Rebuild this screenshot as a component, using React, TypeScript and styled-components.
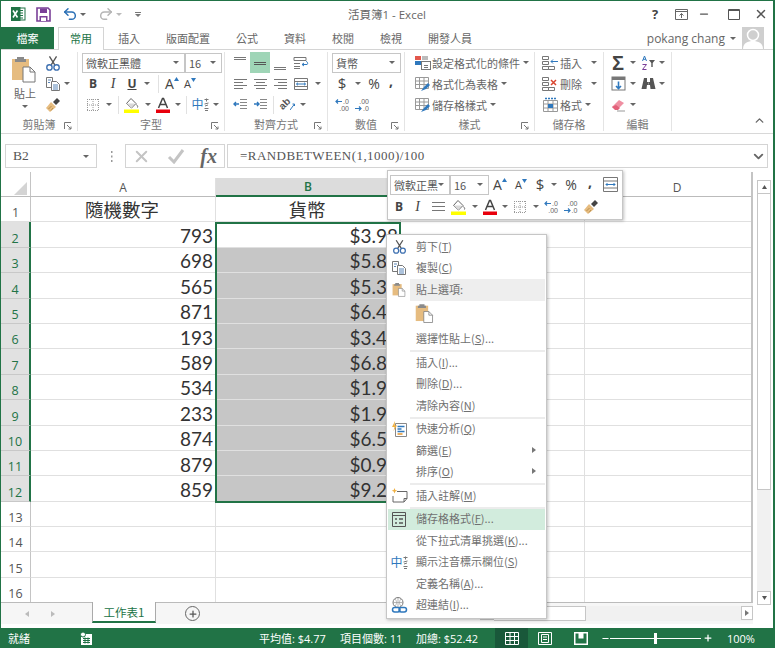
import * as React from 'react'
import styled, { createGlobalStyle } from 'styled-components'
import { Undo2, Redo2, Plus, Minus, ChevronUp, ChevronDown, X as CloseIcon } from 'lucide-react'

const GREEN = '#217346'
const UI_FONT = `"Open Sans", "Noto Sans CJK TC", sans-serif`
const CJK_FONT = `"Noto Sans CJK TC", "Open Sans", sans-serif`

const Global = createGlobalStyle`
  html, body { margin: 0; padding: 0; background: #fff; }
  * { box-sizing: border-box; }
`

const Window = styled.div`
  position: relative;
  width: 775px;
  height: 648px;
  overflow: hidden;
  background: #fff;
  border-top: 1px solid ${GREEN};
  border-left: 1px solid ${GREEN};
  border-right: 2px solid ${GREEN};
  display: flex;
  flex-direction: column;
  font-family: ${UI_FONT};
  font-size: 11px;
  color: #666;
`

const TitleBar = styled.div`
  height: 26px;
  display: grid;
  grid-template-columns: 1fr auto 1fr;
  align-items: center;
`
const QuickAccess = styled.div`
  display: flex;
  align-items: center;
  padding-left: 9px;
`
const TitleText = styled.div`
  font-size: 11.5px;
  color: #666;
`
const WindowButtons = styled.div`
  display: flex;
  align-items: center;
  justify-content: flex-end;
`

// slot for one icon or glyph, width is what varies
const Tool = styled.div<{ $w: number; $on?: boolean }>`
  width: ${({ $w }) => $w}px;
  height: 100%;
  flex: none;
  display: flex;
  align-items: center;
  justify-content: center;
  background: ${({ $on }) => ($on ? '#9fd5b7' : 'transparent')};
`
const Caret = styled.i<{ $c?: string }>`
  display: block;
  width: 0;
  height: 0;
  border-left: 3px solid transparent;
  border-right: 3px solid transparent;
  border-top: 3px solid ${({ $c }) => $c || '#666'};
`
const CaretTool = ({ w = 12, c }: { w?: number; c?: string }) => (
  <Tool $w={w}>
    <Caret $c={c} />
  </Tool>
)
const CustomizeMark = styled.div`
  width: 6px;
  border-top: 1px solid #777;
  padding-top: 1px;
`

const TabStrip = styled.div`
  height: 23px;
  display: flex;
  align-items: flex-start;
  border-bottom: 1px solid #d4d4d4;
`
const FileTab = styled.div`
  width: 53px;
  height: 22px;
  background: ${GREEN};
  color: #fff;
  display: flex;
  align-items: center;
  justify-content: center;
  font-family: ${CJK_FONT};
  font-size: 11px;
`
const RibbonTab = styled.div<{ $active?: boolean }>`
  padding: 0 ${({ $active }) => ($active ? 11 : 13)}px 2px;
  font-family: ${CJK_FONT};
  font-size: 11px;
  display: flex;
  align-items: center;
  height: ${({ $active }) => ($active ? '23px' : '22px')};
  color: ${({ $active }) => ($active ? GREEN : '#666')};
  background: #fff;
  margin-left: ${({ $active }) => ($active ? '4px' : '0')};
  border: 1px solid ${({ $active }) => ($active ? '#d4d4d4' : 'transparent')};
  border-bottom: none;
  margin-right: ${({ $active }) => ($active ? '0' : '-2px')};
  position: relative;
`
const UserBox = styled.div`
  margin-left: auto;
  height: 22px;
  display: flex;
  align-items: center;
  font-size: 12px;
  color: #666;
  padding-right: 9px;
`
const Avatar = styled.div`
  width: 22px;
  height: 22px;
  background: #cfcfcf;
  margin-left: 1px;
  overflow: hidden;
`

const Ribbon = styled.div`
  height: 84px;
  display: flex;
  border-bottom: 1px solid #d8d8d8;
`
const Group = styled.div<{ $w: number }>`
  width: ${({ $w }) => $w}px;
  flex: none;
  margin: 2px 0 2px;
  border-right: 1px solid #e4e4e4;
  display: flex;
  flex-direction: column;
`
const GroupBody = styled.div`
  height: 63px;
  display: flex;
  flex-direction: column;
`
const GroupLabel = styled.div`
  flex: 1;
  display: flex;
  align-items: center;
  justify-content: center;
  position: relative;
  font-family: ${CJK_FONT};
  font-size: 11px;
  color: #777;
  padding-top: 1px;
`
const Launcher = styled.svg`
  position: absolute;
  right: 5px;
  bottom: 2px;
`
const ToolRow = styled.div<{ $pad?: number }>`
  height: 21px;
  display: flex;
  align-items: center;
  padding-left: ${({ $pad }) => $pad || 0}px;
  flex: none;
`
const Divider = styled.i<{ $m?: number }>`
  display: block;
  width: 1px;
  height: 18px;
  background: #e1e1e1;
  margin: 0 ${({ $m }) => $m ?? 3}px;
  flex: none;
`
const ClipboardBody = styled.div`
  display: flex;
  height: 63px;
`
const PasteButton = styled.div`
  width: 44px;
  padding-left: 10px;
  padding-top: 3px;
  display: flex;
  flex-direction: column;
  align-items: flex-start;
  font-family: ${CJK_FONT};
  color: #666;
`
const PasteLabel = styled.div`
  margin-top: 3px;
  line-height: 15px;
  width: 28px;
  text-align: center;
`
const PasteCaret = styled.div`
  width: 28px;
  display: flex;
  justify-content: center;
  margin-top: 4px;
`
const ClipTools = styled.div`
  display: flex;
  flex-direction: column;
`
const Select = styled.div<{ $w: number }>`
  width: ${({ $w }) => $w}px;
  height: 20px;
  flex: none;
  border: 1px solid #c6c6c6;
  background: #fff;
  display: flex;
  align-items: center;
  justify-content: space-between;
  padding: 0 5px 0 3px;
  font-family: ${CJK_FONT};
  font-size: 11px;
  color: #555;
`
const FontGlyph = styled.span<{
  $bold?: boolean
  $italic?: boolean
  $under?: boolean
  $size?: number
  $serif?: boolean
  $lift?: number
}>`
  font-family: ${({ $serif }) => ($serif ? '"Liberation Serif", serif' : UI_FONT)};
  font-weight: ${({ $bold }) => ($bold ? 700 : 400)};
  font-style: ${({ $italic }) => ($italic ? 'italic' : 'normal')};
  text-decoration: ${({ $under }) => ($under ? 'underline' : 'none')};
  font-size: ${({ $size }) => $size || 12}px;
  color: #444;
  line-height: 1;
  margin-bottom: ${({ $lift }) => $lift || 0}px;
`
const GrowGlyph = styled.span`
  display: flex;
  align-items: flex-start;
`
const BlueCjk = styled.span`
  font-family: ${CJK_FONT};
  font-size: 12px;
  color: #2f78bd;
  line-height: 1;
`
const Phonetic = () => (
  <GrowGlyph>
    <BlueCjk>中</BlueCjk>
    <svg width="5" height="13" viewBox="0 0 5 13" fill="none" stroke="#777">
      <path d="M.500 1.500h4M2.500.500v3M.500 6l4-1M1 8l3-1M.500 10.500h4M1 12.500h3" />
    </svg>
  </GrowGlyph>
)
const CommandRow = styled(ToolRow)`
  font-family: ${CJK_FONT};
  font-size: 11px;
  color: #666;
`
const CommandLabel = styled.span<{ $w?: number }>`
  ${({ $w }) => ($w ? `width: ${$w}px;` : '')}
  margin-left: 1px;
  margin-right: 3px;
  flex: none;
`
const ChevronSlot = styled.div`
  margin-left: auto;
  align-self: flex-end;
  padding: 0 7px 6px 0;
  color: #666;
  display: flex;
`
const SigmaText = styled.span`
  font-family: "Liberation Sans", sans-serif;
  font-size: 20px;
  line-height: 1;
  font-weight: 700;
  color: #444;
`
const RotatedAb = styled.span`
  display: block;
  transform: rotate(-45deg);
  font-family: "Liberation Sans", sans-serif;
  font-size: 10px;
  line-height: 10px;
  font-weight: 700;
  color: #555;
`
const DecimalStack = styled.span`
  display: flex;
  flex-direction: column;
  align-items: flex-end;
  font-family: "Liberation Sans", sans-serif;
  font-size: 7px;
  line-height: 7px;
  color: #666;
`
const DecimalLine = styled.span`
  display: flex;
  align-items: center;
  gap: 1px;
`

const FormulaBar = styled.div`
  height: 38px;
  padding: 10px 5px 4px 4px;
  display: flex;
  align-items: stretch;
`
const NameBox = styled.div`
  width: 92px;
  border: 1px solid #d4d4d4;
  display: flex;
  align-items: center;
  justify-content: space-between;
  padding: 0 7px;
  font-family: "Liberation Serif", serif;
  font-size: 13.5px;
  color: #555;
`
const DotsSlot = styled.div`
  width: 28px;
  display: flex;
  align-items: center;
  justify-content: center;
`
const FxBox = styled.div`
  width: 100px;
  border: 1px solid #d4d4d4;
  display: flex;
  align-items: center;
  justify-content: space-between;
  padding: 0 7px 0 6px;
`
const FxText = styled.span`
  font-family: "Liberation Serif", serif;
  font-style: italic;
  font-weight: 700;
  font-size: 20px;
  color: #666;
`
const FormulaBox = styled.div`
  flex: 1;
  margin-left: 2px;
  border: 1px solid #d4d4d4;
  display: flex;
  align-items: center;
  justify-content: space-between;
  padding: 0 1px 0 12px;
  font-family: "Liberation Serif", serif;
  font-size: 13px;
  letter-spacing: 0.45px;
  color: #555;
`

const Main = styled.div`
  height: 431px;
  display: flex;
  position: relative;
`
const SheetGrid = styled.div`
  width: 752px;
  flex: none;
  display: grid;
  grid-template-columns: 30px 185px 185px 184px 185px;
  grid-template-rows: 25px repeat(16, 25.4px);
  overflow: hidden;
  border-right: 2px solid #c4c4c4;
  border-bottom: 1px solid #bbb;
`
const Corner = styled.div`
  border-right: 1px solid #c4c4c4;
  border-bottom: 1px solid #bbb;
  display: flex;
  align-items: flex-end;
  justify-content: flex-end;
  padding: 0 3px 1px 0;
`
const ColHead = styled.div<{ $sel?: boolean }>`
  margin-top: 6px;
  display: flex;
  align-items: center;
  justify-content: center;
  font-size: 12px;
  background: ${({ $sel }) => ($sel ? '#dcdcdc' : '#fff')};
  color: ${({ $sel }) => ($sel ? GREEN : '#555')};
  font-weight: ${({ $sel }) => ($sel ? 600 : 400)};
  border-right: 1px solid #e0e0e0;
  border-bottom: ${({ $sel }) => ($sel ? `2px solid ${GREEN}` : '1px solid #bbb')};
`
const RowHead = styled.div<{ $sel?: boolean }>`
  display: flex;
  align-items: flex-end;
  justify-content: center;
  font-size: 12.5px;
  line-height: 16px;
  background: ${({ $sel }) => ($sel ? '#e1e1e1' : '#fff')};
  color: ${({ $sel }) => ($sel ? GREEN : '#555')};
  border-right: ${({ $sel }) => ($sel ? `2px solid ${GREEN}` : '1px solid #c4c4c4')};
  border-bottom: 1px solid ${({ $sel }) => ($sel ? '#c8c8c8' : '#e0e0e0')};
`
const Cell = styled.div<{ $shade?: boolean; $center?: boolean }>`
  display: flex;
  align-items: center;
  justify-content: ${({ $center }) => ($center ? 'center' : 'flex-end')};
  padding: ${({ $center }) => ($center ? '0 2px 0 0' : '2px 2px 0 0')};
  font-family: ${({ $center }) => ($center ? CJK_FONT : 'Lato, sans-serif')};
  font-size: ${({ $center }) => ($center ? 18.500 : 19)}px;
  color: #333;
  background: ${({ $shade }) => ($shade ? '#c6c6c6' : '#fff')};
  border-right: 1px solid #e0e0e0;
  border-bottom: 1px solid #e0e0e0;
`
const Selection = styled.div`
  position: absolute;
  left: 214px;
  top: 50px;
  width: 186px;
  height: 281px;
  border: 2px solid ${GREEN};
  pointer-events: none;
`
const VScroll = styled.div`
  margin-left: 4px;
  width: 14px;
  padding-top: 8px;
  display: flex;
  flex-direction: column;
`
const ScrollBtn = styled.div<{ $w?: number }>`
  width: ${({ $w }) => $w || 14}px;
  height: 14px;
  flex: none;
  border: 1px solid #c6c6c6;
  background: #fff;
  display: flex;
  align-items: center;
  justify-content: center;
`
const VThumb = styled.div`
  height: 296px;
  flex: none;
  background: #fff;
  border: 1px solid #c6c6c6;
  border-top: none;
`
const VTrack = styled.div`
  height: 101px;
  flex: none;
  background: #f1f1f1;
`

const SheetBar = styled.div`
  height: 25px;
  display: flex;
  padding-right: 20px;
  background: #fff;
`
const SheetNav = styled.div`
  width: 91px;
  display: flex;
  align-items: center;
  padding-left: 24px;
  gap: 22px;
  background: #f6f6f6;
  height: 21px;
`
const SheetTab = styled.div`
  width: 64px;
  height: 21px;
  background: #fff;
  border-left: 1px solid #aaa;
  border-right: 1px solid #aaa;
  border-bottom: 2px solid ${GREEN};
  margin-top: -1px;
  display: flex;
  align-items: center;
  justify-content: center;
  font-family: ${CJK_FONT};
  font-size: 11.500px;
  color: ${GREEN};
  position: relative;
`
const SheetFill = styled.div`
  flex: 1;
  height: 21px;
  background: #f6f6f6;
  display: flex;
  align-items: center;
`
const AddSheet = styled.div`
  width: 15px;
  height: 15px;
  margin-left: 29px;
  border: 1.5px solid #666;
  border-radius: 50%;
  display: flex;
  align-items: center;
  justify-content: center;
  color: #555;
`
const HScroll = styled.div`
  margin-left: auto;
  width: 273px;
  height: 15px;
  display: flex;
  background: #f1f1f1;
`
const HThumb = styled.div`
  width: 92px;
  background: #fff;
  border: 1px solid #c6c6c6;
  border-left: none;
`
const HSpacer = styled.div`
  flex: 1;
`

const StatusBar = styled.div`
  height: 20px;
  background: ${GREEN};
  color: #fff;
  display: flex;
  align-items: stretch;
  padding-left: 7px;
  font-size: 11px;
`
const StatusSlot = styled.div<{ $w: number; $on?: boolean; $center?: boolean }>`
  width: ${({ $w }) => $w}px;
  flex: none;
  display: flex;
  align-items: center;
  justify-content: ${({ $center }) => ($center ? 'center' : 'flex-start')};
  font-family: ${UI_FONT};
  background: ${({ $on }) => ($on ? '#19583a' : 'transparent')};
  white-space: nowrap;
`
const ZoomTrack = styled.div`
  width: 91px;
  flex: none;
  align-self: center;
  height: 1px;
  background: #fff;
  display: flex;
  align-items: center;
`
const ZoomHandle = styled.i`
  display: block;
  width: 3px;
  height: 11px;
  background: #fff;
  margin-left: 44px;
`

const MiniBar = styled.div`
  position: absolute;
  left: 386px;
  top: 169px;
  width: 236px;
  height: 50px;
  background: #fff;
  border: 1px solid #c6c6c6;
  box-shadow: 1px 1px 3px rgba(0, 0, 0, 0.25);
  padding: 2px 2px;
  display: flex;
  flex-direction: column;
`
const MiniRow = styled.div<{ $h: number }>`
  height: ${({ $h }) => $h}px;
  display: flex;
  align-items: center;
  flex: none;
`
const Menu = styled.div`
  position: absolute;
  left: 385px;
  top: 233px;
  width: 161px;
  height: 385px;
  background: #fff;
  border: 1px solid #c6c6c6;
  box-shadow: 1px 1px 3px rgba(0, 0, 0, 0.25);
  padding: 1px;
  display: flex;
  flex-direction: column;
`
const MenuRow = styled.div<{ $hover?: boolean }>`
  height: 21.5px;
  flex: none;
  display: flex;
  align-items: stretch;
  background: ${({ $hover }) => ($hover ? '#d2ecdd' : 'transparent')};
  font-family: ${CJK_FONT};
  font-size: 11px;
  color: #707070;
`
const MenuIcon = styled.div`
  width: 22px;
  flex: none;
  display: flex;
  align-items: center;
  justify-content: center;
`
const MenuLabel = styled.div<{ $band?: boolean }>`
  flex: 1;
  display: flex;
  align-items: center;
  justify-content: space-between;
  padding: 0 9px 2px 6px;
  background: ${({ $band }) => ($band ? '#eeeeee' : 'transparent')};
`
const MenuSep = styled.div`
  height: 2px;
  margin: 0 0 0 22px;
  background: #ececec;
  flex: none;
`
const PasteOptions = styled.div`
  height: 28px;
  flex: none;
  padding: 1px 0 0 27px;
`
const SubArrow = styled.i`
  display: block;
  width: 0;
  height: 0;
  border-top: 3.5px solid transparent;
  border-bottom: 3.5px solid transparent;
  border-left: 4px solid #777;
`
const SideArrow = styled.i<{ $left?: boolean }>`
  display: block;
  width: 0;
  height: 0;
  border-top: 3.5px solid transparent;
  border-bottom: 3.5px solid transparent;
  ${({ $left }) => ($left ? 'border-right: 4px solid #bbb;' : 'border-left: 4px solid #bbb;')}
`

const ExcelLogo = () => (
  <svg width="16" height="16" viewBox="0 0 16 16">
    <rect x="6" y="2" width="9" height="12" fill="#fff" stroke="#217346" />
    <path d="M9 4.500h4M9 7h4M9 9.500h4M9 12h4" stroke="#217346" />
    <rect x="1" y="1" width="9.500" height="14" fill="#217346" />
    <path d="M3 4.500l4.500 7M7.500 4.500l-4.500 7" stroke="#fff" strokeWidth="1.600" />
  </svg>
)
const SaveIcon = () => (
  <svg width="15" height="15" viewBox="0 0 15 15">
    <path d="M1 1h11l2 2v11H1z" fill="#fff" stroke="#7a3f98" strokeWidth="1.600" />
    <rect x="4" y="1.500" width="7" height="4.500" fill="#7a3f98" />
    <rect x="3.500" y="9" width="8" height="5" fill="#7a3f98" />
    <rect x="5" y="10.500" width="5" height="3.500" fill="#fff" />
  </svg>
)
const ScissorsIcon = ({ s = 18 }: { s?: number }) => (
  <svg width={s} height={s} viewBox="0 0 18 18" fill="none">
    <path d="M7 11L13 1.500M11 11L5 1.500" stroke="#555" strokeWidth="1.500" />
    <circle cx="5" cy="14" r="3" stroke="#3c6fb0" strokeWidth="1.500" />
    <circle cx="13" cy="14" r="3" stroke="#3c6fb0" strokeWidth="1.500" />
  </svg>
)
const CopyIcon = () => (
  <svg width="16" height="16" viewBox="0 0 16 16" fill="#fff">
    <path d="M1.500 1.500h6v10h-6z" stroke="#777" />
    <path d="M6.500 5.500h5l3 3v6h-8z" stroke="#777" />
    <path d="M3 4h3M3 6.500h2M8 9h5M8 11h5M8 13h5" stroke="#5a86b8" />
  </svg>
)
const PasteIcon = ({ w = 26, h = 28 }: { w?: number; h?: number }) => (
  <svg width={w} height={h} viewBox="0 0 26 28">
    <rect x="1" y="4" width="17" height="21" fill="#e6bc80" />
    <path d="M6 4V2h7v2h2v3H4V4z" fill="#8a8a8a" />
    <path d="M12 12h7l5 5v10H12z" fill="#fff" stroke="#777" />
    <path d="M19 12v5h5" fill="none" stroke="#777" />
  </svg>
)
const PainterIcon = () => (
  <svg width="16" height="16" viewBox="0 0 16 16">
    <path d="M1 11l5-6 5 5-6 5z" fill="#e6bc80" />
    <path d="M3.500 12l3-3M6 13.500l2-2.500" stroke="#b98f4d" />
    <path d="M8 5l4-4 3 3-4 4z" fill="#444" />
  </svg>
)
const BorderIcon = () => (
  <svg width="14" height="14" viewBox="0 0 14 14" fill="none">
    <path d="M1 1.500h12M1 7h12M1 12.500h12M1.500 1v12M7 1v12M12.500 1v12" stroke="#999" strokeDasharray="1 1" />
  </svg>
)
const FillIcon = () => (
  <svg width="16" height="16" viewBox="0 0 16 16" fill="none">
    <path d="M7 1.500l5 5-4.500 4.500-5-4.500z" fill="#fff" stroke="#666" />
    <path d="M2.500 6.500h8l-3 4.500z" fill="#d9d9d9" />
    <path d="M12.500 7.500c1 1.500 1.500 2 1 3" stroke="#666" />
    <rect x="0" y="12.500" width="15" height="3.500" fill="#ffff00" />
  </svg>
)
const ColorIcon = () => (
  <svg width="16" height="16" viewBox="0 0 16 16" fill="none">
    <path d="M3.500 11L7.500 1.500h1L12.500 11M5 7.500h6" stroke="#444" strokeWidth="1.500" />
    <rect x="1" y="12.500" width="14" height="3.500" fill="#e8000c" />
  </svg>
)
const Triangle = ({ up, c = '#2f78bd' }: { up?: boolean; c?: string }) => (
  <svg width="5" height="4" viewBox="0 0 5 4">
    <path d={up ? 'M0 4l2.500-4L5 4z' : 'M0 0l2.500 4L5 0z'} fill={c} />
  </svg>
)
const Lines = ({ v, a }: { v: 't' | 'm' | 'b'; a?: boolean }) => {
  const y = v === 't' ? 2 : v === 'm' ? 7 : 12
  return (
    <svg width="14" height="16" viewBox="0 0 14 16" stroke={a ? '#555' : '#777'}>
      <path d={`M1 ${y}.500h12M1 ${y + 2}.500h12`} />
    </svg>
  )
}
const AlignIcon = ({ k }: { k: 'l' | 'c' | 'r' | 'j' }) => {
  const d = {
    l: 'M1 2.500h13M1 5.500h9M1 8.500h13M1 11.500h9',
    c: 'M1 2.500h13M3 5.500h9M1 8.500h13M3 11.500h9',
    r: 'M1 2.500h13M5 5.500h9M1 8.500h13M5 11.500h9',
    j: 'M1 2.500h13M1 6.500h13M1 10.500h13'
  }[k]
  return (
    <svg width="15" height="14" viewBox="0 0 15 14" fill="none" stroke="#777">
      <path d={d} />
    </svg>
  )
}
const WrapIcon = () => (
  <svg width="16" height="14" viewBox="0 0 16 14" fill="none">
    <path d="M1 1.500h12v3H1zM1 7.500h6M1 10.500h6M1 12.500h6" stroke="#777" />
    <path d="M9 8.500h5c1 0 1-3-1-3M11 7l-2 1.500 2 1.500" stroke="#2f78bd" />
  </svg>
)
const MergeIcon = () => (
  <svg width="16" height="14" viewBox="0 0 16 14" fill="none">
    <path d="M1.500 1.500h13v11h-13zM1.500 4.500h13M1.500 9.500h13" stroke="#777" />
    <path d="M3.500 7h9M5 5.700L3.500 7 5 8.300M11 5.700L12.500 7 11 8.300" stroke="#2f78bd" />
  </svg>
)
const IndentIcon = ({ inc }: { inc?: boolean }) => (
  <svg width="15" height="13" viewBox="0 0 15 13" fill="none">
    <path d="M7 1.500h7M7 4.500h7M7 7.500h7M7 10.500h7" stroke="#888" />
    <path d={inc ? 'M1 6h5M4 4l2 2-2 2' : 'M1 6h5M3 4L1 6l2 2'} stroke="#2f78bd" strokeWidth="1.400" />
  </svg>
)
const OrientIcon = () => (
  <GrowGlyph>
    <RotatedAb>ab</RotatedAb>
    <svg width="5" height="12" viewBox="0 0 5 12" fill="none">
      <path d="M0 11L4.500 5M2.500 5h2v2" stroke="#2f78bd" />
    </svg>
  </GrowGlyph>
)
const SmallArrow = ({ left }: { left?: boolean }) => (
  <svg width="7" height="5" viewBox="0 0 7 5" fill="none" stroke="#2f78bd" strokeWidth="1.200">
    <path d={left ? 'M7 2.500H1M3 .500l-2 2 2 2' : 'M0 2.500h6M4 .500l2 2-2 2'} />
  </svg>
)
const DecimalIcon = ({ up }: { up?: boolean }) =>
  up ? (
    <DecimalStack>
      <DecimalLine><SmallArrow left />.0</DecimalLine>
      <DecimalLine>.00</DecimalLine>
    </DecimalStack>
  ) : (
    <DecimalStack>
      <DecimalLine>.00</DecimalLine>
      <DecimalLine><SmallArrow />.0</DecimalLine>
    </DecimalStack>
  )
const CondFormatIcon = () => (
  <svg width="17" height="15" viewBox="0 0 17 15" fill="none">
    <rect x="1" y="1" width="6" height="4" fill="#e2574c" />
    <rect x="8" y="1" width="6" height="4" fill="#bbb" />
    <rect x="1" y="6" width="6" height="4" fill="#2f78bd" />
    <rect x="7.500" y="6.500" width="9" height="8" fill="#fff" stroke="#777" />
    <path d="M10 10.500h4M10 12.500h4" stroke="#777" />
  </svg>
)
const TableIcon = () => (
  <svg width="17" height="16" viewBox="0 0 17 16" fill="none">
    <path d="M1.500 1.500h13v11h-13zM1.500 5h13M1.500 8.500h13M5.500 1.500v11M10 1.500v11" stroke="#999" />
    <path d="M7 15l3-4 4-4 2 2-4 4z" fill="#2f78bd" />
  </svg>
)
const InsertCellIcon = ({ del }: { del?: boolean }) => (
  <svg width="18" height="16" viewBox="0 0 18 16" fill="none">
    <path d="M1.500 1.500h6v3h-6zM1.500 6.500h6v3h-6zM1.500 11.500h6v3h-6zM7.500 11.500h6v3h-6z" stroke="#777" />
    {del ? (
      <path d="M10 4l5 5M15 4l-5 5" stroke="#d9452f" strokeWidth="1.500" />
    ) : (
      <path d="M10 6.500h7M12 4.500l-2 2 2 2" stroke="#2f78bd" />
    )}
  </svg>
)
const FormatCellIcon = () => (
  <svg width="17" height="16" viewBox="0 0 17 16" fill="none">
    <path d="M1.500 3.500h14v11h-14zM1.500 7h14M1.500 11h14M6 3.500v11M11 3.500v11" stroke="#999" />
    <rect x="6" y="7" width="5" height="4" fill="#2f78bd" />
    <path d="M3 1.500h11" stroke="#2f78bd" strokeDasharray="2 1" strokeWidth="1.400" />
  </svg>
)
const SortIcon = () => (
  <svg width="15" height="16" viewBox="0 0 15 16" fill="none">
    <path d="M1.500 6L3.500 1 5.500 6M2.200 4.300h2.600" stroke="#2f78bd" />
    <path d="M1.500 9.500h4l-4 5h4" stroke="#7a3f98" />
    <path d="M8 5h6l-2.300 3v4h-1.400V8z" fill="#555" />
  </svg>
)
const FillDownIcon = () => (
  <svg width="15" height="15" viewBox="0 0 15 15" fill="none">
    <rect x="1" y="1" width="13" height="13" fill="#fff" stroke="#777" />
    <rect x="1" y="1" width="13" height="3" fill="#777" />
    <path d="M7.500 5.500v7M5 10l2.500 2.500L10 10" stroke="#2f78bd" strokeWidth="1.600" />
  </svg>
)
const BinocularsIcon = () => (
  <svg width="15" height="14" viewBox="0 0 15 14">
    <path d="M3 1h3v4h3V1h3l2.500 11h-5L9 8H6l-.5 4h-5z" fill="#555" />
    <path d="M7 5.500h1v2H7z" fill="#999" />
  </svg>
)
const EraserIcon = () => (
  <svg width="15" height="14" viewBox="0 0 15 14">
    <path d="M1 9l7-7 5 3-6 6H4z" fill="#ef8fa2" />
    <path d="M1 9l3 3h3l2-2-4-3z" fill="#e2617a" />
    <path d="M6 13h8" stroke="#999" />
  </svg>
)
const LaunchGlyph = () => (
  <Launcher width="8" height="8" viewBox="0 0 8 8" fill="none">
    <path d="M.500 7V.500H7M3 3l4 4M4.500 7H7V4.500" stroke="#777" />
  </Launcher>
)
const MiniFormatIcon = () => (
  <svg width="15" height="15" viewBox="0 0 15 15" fill="none">
    <path d="M.500.500h14v14H.500zM.500 4h14M.500 11h14" stroke="#777" />
    <path d="M3 7.500h9M4.500 6L3 7.500 4.500 9M10.500 6L12 7.500 10.500 9" stroke="#2f78bd" />
  </svg>
)
const QuickAnalysisIcon = () => (
  <svg width="17" height="17" viewBox="0 0 17 17" fill="none">
    <path d="M4.500 2.500h11v13h-11z" stroke="#888" />
    <path d="M6.500 5.500h7M6.500 8h4M6.500 10.500h7" stroke="#2f78bd" strokeWidth="1.500" />
    <path d="M6.500 13h5" stroke="#e6952c" strokeWidth="1.500" />
    <path d="M4 0L1 6h2.500L2.500 10 6 4.500H3.700z" fill="#f0b040" />
  </svg>
)
const CommentIcon = () => (
  <svg width="17" height="15" viewBox="0 0 17 15" fill="none">
    <path d="M6 3.500h10v7l-3 3.500H2V8" stroke="#666" />
    <path d="M13 14v-3.500h3" stroke="#666" />
    <path d="M3.500 0l.8 2 2 .8-2 .8-.8 2-.8-2-2-.8 2-.8z" fill="#f0b040" />
  </svg>
)
const FormatDialogIcon = () => (
  <svg width="14" height="15" viewBox="0 0 14 15" fill="none">
    <path d="M.500.500h13v14H.500zM.500 3.500h13" stroke="#555" />
    <path d="M3 7h2M7 7h4M3 11h2M7 11h4" stroke="#555" strokeWidth="1.300" />
  </svg>
)
const LinkIcon = () => (
  <svg width="17" height="17" viewBox="0 0 17 17" fill="none">
    <circle cx="7" cy="5.500" r="5" stroke="#777" />
    <path d="M2 5.500h10M7 .500v10M4 2c2 2 2 5 0 7M10 2c-2 2-2 5 0 7" stroke="#999" strokeWidth=".7" />
    <rect x="1.500" y="10.500" width="7.500" height="4.500" rx="2.200" fill="#fff" stroke="#2f78bd" strokeWidth="1.500" />
    <rect x="8" y="10.500" width="7.500" height="4.500" rx="2.200" stroke="#2f78bd" strokeWidth="1.500" />
  </svg>
)
const MacroIcon = () => (
  <svg width="12" height="13" viewBox="0 0 12 13">
    <rect x="1" y="2" width="11" height="11" fill="#fff" />
    <circle cx="3" cy="2.500" r="2.500" fill="#fff" stroke="#217346" />
    <path d="M3 6.500h7M3 8.500h7M3 10.500h7M5 5.500v6M8 5.500v6" stroke="#217346" />
  </svg>
)
const NormalViewIcon = () => (
  <svg width="14" height="13" viewBox="0 0 14 13" fill="none" stroke="#fff">
    <path d="M.500.500h13v12H.500zM.500 4.500h13M.500 8.500h13M5 .500v12M9.500.500v12" />
  </svg>
)
const PageViewIcon = () => (
  <svg width="14" height="13" viewBox="0 0 14 13" fill="none" stroke="#fff">
    <path d="M.500.500h13v12H.500zM3.500 2.500h7v8h-7zM5 5h4M5 7.500h4" />
  </svg>
)
const BreakViewIcon = () => (
  <svg width="14" height="13" viewBox="0 0 14 13" fill="#fff">
    <path d="M0 0h14v13H0zM1.500 1.500v10h11v-10h-3v5h-5v-5z" fillRule="evenodd" />
  </svg>
)
const RibbonOptionsIcon = () => (
  <svg width="13" height="11" viewBox="0 0 13 11" fill="none" stroke="#666">
    <path d="M.500.500h12v10H.500zM.500 2.500h12M6.500 9V4.500M4.500 6.500l2-2 2 2" />
  </svg>
)
const CornerIcon = () => (
  <svg width="13" height="13" viewBox="0 0 13 13">
    <path d="M13 0v13H0z" fill="#d4d4d4" />
  </svg>
)
const PersonIcon = () => (
  <svg width="22" height="22" viewBox="0 0 22 22">
    <circle cx="11" cy="8" r="5.500" fill="none" stroke="#fff" strokeWidth="1.500" />
    <path d="M1 22c0-6 5-8 10-8s10 2 10 8z" fill="#fff" />
  </svg>
)

const tabs = ['插入', '版面配置', '公式', '資料', '校閱', '檢視', '開發人員']
const colA = [793, 698, 565, 871, 193, 589, 534, 233, 874, 879, 859]
const colB = ['$3.98', '$5.83', '$5.32', '$6.41', '$3.44', '$6.83', '$1.95', '$1.94', '$6.56', '$0.92', '$9.24']
const rowNums = Array.from({ length: 16 }, (_, i) => i + 1)

const Item = ({
  icon,
  label,
  hot,
  tail = '',
  sub,
  hover
}: {
  icon?: React.ReactNode
  label: string
  hot: string
  tail?: string
  sub?: boolean
  hover?: boolean
}) => (
  <MenuRow $hover={hover}>
    <MenuIcon>{icon}</MenuIcon>
    <MenuLabel>
      <span>
        {label}(<u>{hot}</u>){tail}
      </span>
      {sub && <SubArrow />}
    </MenuLabel>
  </MenuRow>
)

const Spreadsheet = () => (
  <SheetGrid>
    <Corner>
      <CornerIcon />
    </Corner>
    <ColHead>A</ColHead>
    <ColHead $sel>B</ColHead>
    {/* column C's letter sits under the mini toolbar */}
    <ColHead />
    <ColHead>D</ColHead>
    {rowNums.map(n => {
      const i = n - 2
      const sel = n >= 2 && n <= 12
      return (
        <React.Fragment key={n}>
          <RowHead $sel={sel}>{n}</RowHead>
          {n === 1 ? <Cell $center>隨機數字</Cell> : <Cell>{colA[i]}</Cell>}
          {n === 1 ? <Cell $center>貨幣</Cell> : <Cell $shade={sel && n > 2}>{colB[i]}</Cell>}
          <Cell />
          <Cell />
        </React.Fragment>
      )
    })}
  </SheetGrid>
)

const App = () => (
  <Window>
    <Global />
    <TitleBar>
      <QuickAccess>
        <Tool $w={16}><ExcelLogo /></Tool>
        <Tool $w={35}><SaveIcon /></Tool>
        <Tool $w={18}><Undo2 size={16} color="#2a6fb5" strokeWidth={2.2} /></Tool>
        <CaretTool w={8} />
        <Tool $w={10} />
        <Tool $w={18}><Redo2 size={16} color="#b5b5b5" strokeWidth={2.2} /></Tool>
        <CaretTool w={8} c="#bbb" />
        <Tool $w={29}>
          <CustomizeMark><Caret $c="#777" /></CustomizeMark>
        </Tool>
      </QuickAccess>
      <TitleText>活頁簿1 - Excel</TitleText>
      <WindowButtons>
        <Tool $w={36}><FontGlyph $bold $size={13}>?</FontGlyph></Tool>
        <Tool $w={16}><RibbonOptionsIcon /></Tool>
        <Tool $w={30}><Minus size={12} color="#555" strokeWidth={2.5} /></Tool>
        <Tool $w={30}>
          <svg width="12" height="11" viewBox="0 0 12 11" fill="none" stroke="#555">
            <path d="M.500.500h11v10H.500z" />
            <path d="M.500 1.500h11" />
          </svg>
        </Tool>
        <Tool $w={24}><CloseIcon size={14} color="#555" strokeWidth={2.5} /></Tool>
      </WindowButtons>
    </TitleBar>

    <TabStrip>
      <FileTab>檔案</FileTab>
      <RibbonTab $active>常用</RibbonTab>
      {tabs.map(t => (
        <RibbonTab key={t}>{t}</RibbonTab>
      ))}
      <UserBox>
        pokang chang
        <Tool $w={16}><Caret /></Tool>
        <Avatar><PersonIcon /></Avatar>
      </UserBox>
    </TabStrip>

    <Ribbon>
      <Group $w={77}>
        <ClipboardBody>
          <PasteButton>
            <PasteIcon />
            <PasteLabel>貼上</PasteLabel>
            <PasteCaret><Caret /></PasteCaret>
          </PasteButton>
          <ClipTools>
            <ToolRow><Tool $w={16}><ScissorsIcon s={16} /></Tool></ToolRow>
            <ToolRow>
              <Tool $w={16}><CopyIcon /></Tool>
              <CaretTool w={12} />
            </ToolRow>
            <ToolRow><Tool $w={16}><PainterIcon /></Tool></ToolRow>
          </ClipTools>
        </ClipboardBody>
        <GroupLabel>剪貼簿<LaunchGlyph /></GroupLabel>
      </Group>

      <Group $w={147}>
        <GroupBody>
          <ToolRow $pad={4}>
            <Select $w={103}>微軟正黑體<Caret /></Select>
            <Select $w={37}>16<Caret /></Select>
          </ToolRow>
          <ToolRow $pad={5}>
            <Tool $w={20}><FontGlyph $bold>B</FontGlyph></Tool>
            <Tool $w={20}><FontGlyph $italic $serif $size={14}>I</FontGlyph></Tool>
            <Tool $w={18}><FontGlyph $under $bold>U</FontGlyph></Tool>
            <CaretTool />
            <Divider $m={5} />
            <Tool $w={16}><GrowGlyph><FontGlyph $size={14}>A</FontGlyph><Triangle up /></GrowGlyph></Tool>
            <Tool $w={20}><GrowGlyph><FontGlyph $size={11}>A</FontGlyph><Triangle /></GrowGlyph></Tool>
          </ToolRow>
          <ToolRow $pad={5}>
            <Tool $w={20}><BorderIcon /></Tool>
            <CaretTool />
            <Divider />
            <Tool $w={20}><FillIcon /></Tool>
            <CaretTool w={11} />
            <Tool $w={20}><ColorIcon /></Tool>
            <CaretTool w={10} />
            <Divider />
            <Tool $w={20}><Phonetic /></Tool>
            <CaretTool />
          </ToolRow>
        </GroupBody>
        <GroupLabel>字型<LaunchGlyph /></GroupLabel>
      </Group>

      <Group $w={103}>
        <GroupBody>
          <ToolRow $pad={5}>
            <Tool $w={20}><Lines v="t" /></Tool>
            <Tool $w={20} $on><Lines v="m" a /></Tool>
            <Tool $w={20}><Lines v="b" /></Tool>
            <Tool $w={22}><WrapIcon /></Tool>
          </ToolRow>
          <ToolRow $pad={5}>
            <Tool $w={20}><AlignIcon k="l" /></Tool>
            <Tool $w={20}><AlignIcon k="c" /></Tool>
            <Tool $w={20}><AlignIcon k="r" /></Tool>
            <Tool $w={22}><MergeIcon /></Tool>
            <CaretTool />
          </ToolRow>
          <ToolRow $pad={5}>
            <Tool $w={20}><IndentIcon /></Tool>
            <Tool $w={20}><IndentIcon inc /></Tool>
            <Divider />
            <Tool $w={20}><OrientIcon /></Tool>
            <CaretTool />
          </ToolRow>
        </GroupBody>
        <GroupLabel>對齊方式<LaunchGlyph /></GroupLabel>
      </Group>

      <Group $w={77}>
        <GroupBody>
          <ToolRow $pad={4}><Select $w={69}>貨幣<Caret /></Select></ToolRow>
          <ToolRow $pad={4}>
            <Tool $w={20}><FontGlyph $size={15}>$</FontGlyph></Tool>
            <CaretTool />
            <Tool $w={20}><FontGlyph $size={14}>%</FontGlyph></Tool>
            <Tool $w={14}><FontGlyph $bold $size={14} $lift={6}>,</FontGlyph></Tool>
          </ToolRow>
          <ToolRow $pad={4}>
            <Tool $w={20}><DecimalIcon up /></Tool>
            <Tool $w={20}><DecimalIcon /></Tool>
          </ToolRow>
        </GroupBody>
        <GroupLabel>數值<LaunchGlyph /></GroupLabel>
      </Group>

      <Group $w={130}>
        <GroupBody>
          <CommandRow $pad={8}><Tool $w={18}><CondFormatIcon /></Tool><CommandLabel>設定格式化的條件</CommandLabel><Caret /></CommandRow>
          <CommandRow $pad={8}><Tool $w={18}><TableIcon /></Tool><CommandLabel>格式化為表格</CommandLabel><Caret /></CommandRow>
          <CommandRow $pad={8}><Tool $w={18}><TableIcon /></Tool><CommandLabel>儲存格樣式</CommandLabel><Caret /></CommandRow>
        </GroupBody>
        <GroupLabel>樣式<LaunchGlyph /></GroupLabel>
      </Group>

      <Group $w={69}>
        <GroupBody>
          <CommandRow $pad={6}><Tool $w={18}><InsertCellIcon /></Tool><CommandLabel $w={22}>插入</CommandLabel><CaretTool w={18} /></CommandRow>
          <CommandRow $pad={6}><Tool $w={18}><InsertCellIcon del /></Tool><CommandLabel $w={22}>刪除</CommandLabel><CaretTool w={18} /></CommandRow>
          <CommandRow $pad={6}><Tool $w={18}><FormatCellIcon /></Tool><CommandLabel $w={22}>格式</CommandLabel><CaretTool w={6} /></CommandRow>
        </GroupBody>
        <GroupLabel>儲存格</GroupLabel>
      </Group>

      <Group $w={68}>
        <GroupBody>
          <ToolRow $pad={4}>
            <Tool $w={20}><SigmaText>Σ</SigmaText></Tool>
            <CaretTool w={10} />
            <Tool $w={20}><SortIcon /></Tool>
            <CaretTool w={8} />
          </ToolRow>
          <ToolRow $pad={4}>
            <Tool $w={20}><FillDownIcon /></Tool>
            <CaretTool w={10} />
            <Tool $w={20}><BinocularsIcon /></Tool>
            <CaretTool w={8} />
          </ToolRow>
          <ToolRow $pad={4}>
            <Tool $w={20}><EraserIcon /></Tool>
            <CaretTool w={10} />
          </ToolRow>
        </GroupBody>
        <GroupLabel>編輯</GroupLabel>
      </Group>

      <ChevronSlot><ChevronUp size={13} strokeWidth={2.5} /></ChevronSlot>
    </Ribbon>

    <FormulaBar>
      <NameBox>B2<Caret /></NameBox>
      <DotsSlot>
        <svg width="3" height="11" viewBox="0 0 3 11" fill="#999">
          <path d="M1 0h1.500v2H1zM1 4.500h1.500v2H1zM1 9h1.500v2H1z" />
        </svg>
      </DotsSlot>
      <FxBox>
        <CloseIcon size={19} color="#c4c4c4" strokeWidth={2.5} />
        <svg width="18" height="16" viewBox="0 0 18 16" fill="none">
          <path d="M2 9l5 5L16 2" stroke="#c4c4c4" strokeWidth="3" />
        </svg>
        <FxText>fx</FxText>
      </FxBox>
      <FormulaBox>
        =RANDBETWEEN(1,1000)/100
        <ChevronDown size={15} color="#666" strokeWidth={3} />
      </FormulaBox>
    </FormulaBar>

    <Main>
      <Spreadsheet />
      <Selection />
      <VScroll>
        <ScrollBtn><Triangle up c="#555" /></ScrollBtn>
        <VThumb />
        <VTrack />
        <ScrollBtn><Triangle c="#555" /></ScrollBtn>
      </VScroll>
    </Main>

    <SheetBar>
      <SheetNav>
        <SideArrow $left />
        <SideArrow />
      </SheetNav>
      <SheetTab>工作表1</SheetTab>
      <SheetFill>
        <AddSheet><Plus size={10} strokeWidth={3} /></AddSheet>
        <HScroll>
          <ScrollBtn />
          <HThumb />
          <HSpacer />
          <ScrollBtn $w={12}><SubArrow /></ScrollBtn>
        </HScroll>
      </SheetFill>
    </SheetBar>

    <StatusBar>
      <StatusSlot $w={72}>就緒</StatusSlot>
      <StatusSlot $w={179}><MacroIcon /></StatusSlot>
      <StatusSlot $w={81}>平均值: $4.77</StatusSlot>
      <StatusSlot $w={76}>項目個數: 11</StatusSlot>
      <StatusSlot $w={79}>加總: $52.42</StatusSlot>
      <StatusSlot $w={33} $on $center><NormalViewIcon /></StatusSlot>
      <StatusSlot $w={34} $center><PageViewIcon /></StatusSlot>
      <StatusSlot $w={38} $center><BreakViewIcon /></StatusSlot>
      <StatusSlot $w={10} $center><Minus size={9} strokeWidth={3} /></StatusSlot>
      <ZoomTrack><ZoomHandle /></ZoomTrack>
      <StatusSlot $w={14} $center><Plus size={10} strokeWidth={3} /></StatusSlot>
      <StatusSlot $w={12} />
      <StatusSlot $w={30}>100%</StatusSlot>
    </StatusBar>

    <MiniBar>
      <MiniRow $h={23}>
        <Select $w={60}>微軟正黑<Caret /></Select>
        <Select $w={39}>16<Caret /></Select>
        <Tool $w={22}><GrowGlyph><FontGlyph $size={14}>A</FontGlyph><Triangle up /></GrowGlyph></Tool>
        <Tool $w={20}><GrowGlyph><FontGlyph $size={11}>A</FontGlyph><Triangle /></GrowGlyph></Tool>
        <Tool $w={18}><FontGlyph $size={15}>$</FontGlyph></Tool>
        <CaretTool w={10} />
        <Tool $w={24}><FontGlyph $size={14}>%</FontGlyph></Tool>
        <Tool $w={14}><FontGlyph $bold $size={14} $lift={6}>,</FontGlyph></Tool>
        <Tool $w={26}><MiniFormatIcon /></Tool>
      </MiniRow>
      <MiniRow $h={21}>
        <Tool $w={18}><FontGlyph $bold>B</FontGlyph></Tool>
        <Tool $w={19}><FontGlyph $italic $serif $size={14}>I</FontGlyph></Tool>
        <Tool $w={22}><AlignIcon k="j" /></Tool>
        <Tool $w={20}><FillIcon /></Tool>
        <CaretTool w={11} />
        <Tool $w={20}><ColorIcon /></Tool>
        <CaretTool w={10} />
        <Tool $w={20}><BorderIcon /></Tool>
        <CaretTool w={11} />
        <Tool $w={20}><DecimalIcon up /></Tool>
        <Tool $w={19}><DecimalIcon /></Tool>
        <Tool $w={21}><PainterIcon /></Tool>
      </MiniRow>
    </MiniBar>

    <Menu>
      <Item icon={<ScissorsIcon s={15} />} label="剪下" hot="T" />
      <Item icon={<CopyIcon />} label="複製" hot="C" />
      <MenuRow>
        <MenuIcon><PasteIcon w={14} h={15} /></MenuIcon>
        <MenuLabel $band>貼上選項:</MenuLabel>
      </MenuRow>
      <PasteOptions><PasteIcon w={19} h={22} /></PasteOptions>
      <Item label="選擇性貼上" hot="S" tail="..." />
      <MenuSep />
      <Item label="插入" hot="I" tail="..." />
      <Item label="刪除" hot="D" tail="..." />
      <Item label="清除內容" hot="N" />
      <MenuSep />
      <Item icon={<QuickAnalysisIcon />} label="快速分析" hot="Q" />
      <Item label="篩選" hot="E" sub />
      <Item label="排序" hot="O" sub />
      <MenuSep />
      <Item icon={<CommentIcon />} label="插入註解" hot="M" />
      <MenuSep />
      <Item icon={<FormatDialogIcon />} label="儲存格格式" hot="F" tail="..." hover />
      <Item label="從下拉式清單挑選" hot="K" tail="..." />
      <Item icon={<Phonetic />} label="顯示注音標示欄位" hot="S" />
      <Item label="定義名稱" hot="A" tail="..." />
      <Item icon={<LinkIcon />} label="超連結" hot="I" tail="..." />
    </Menu>
  </Window>
)

export default App
